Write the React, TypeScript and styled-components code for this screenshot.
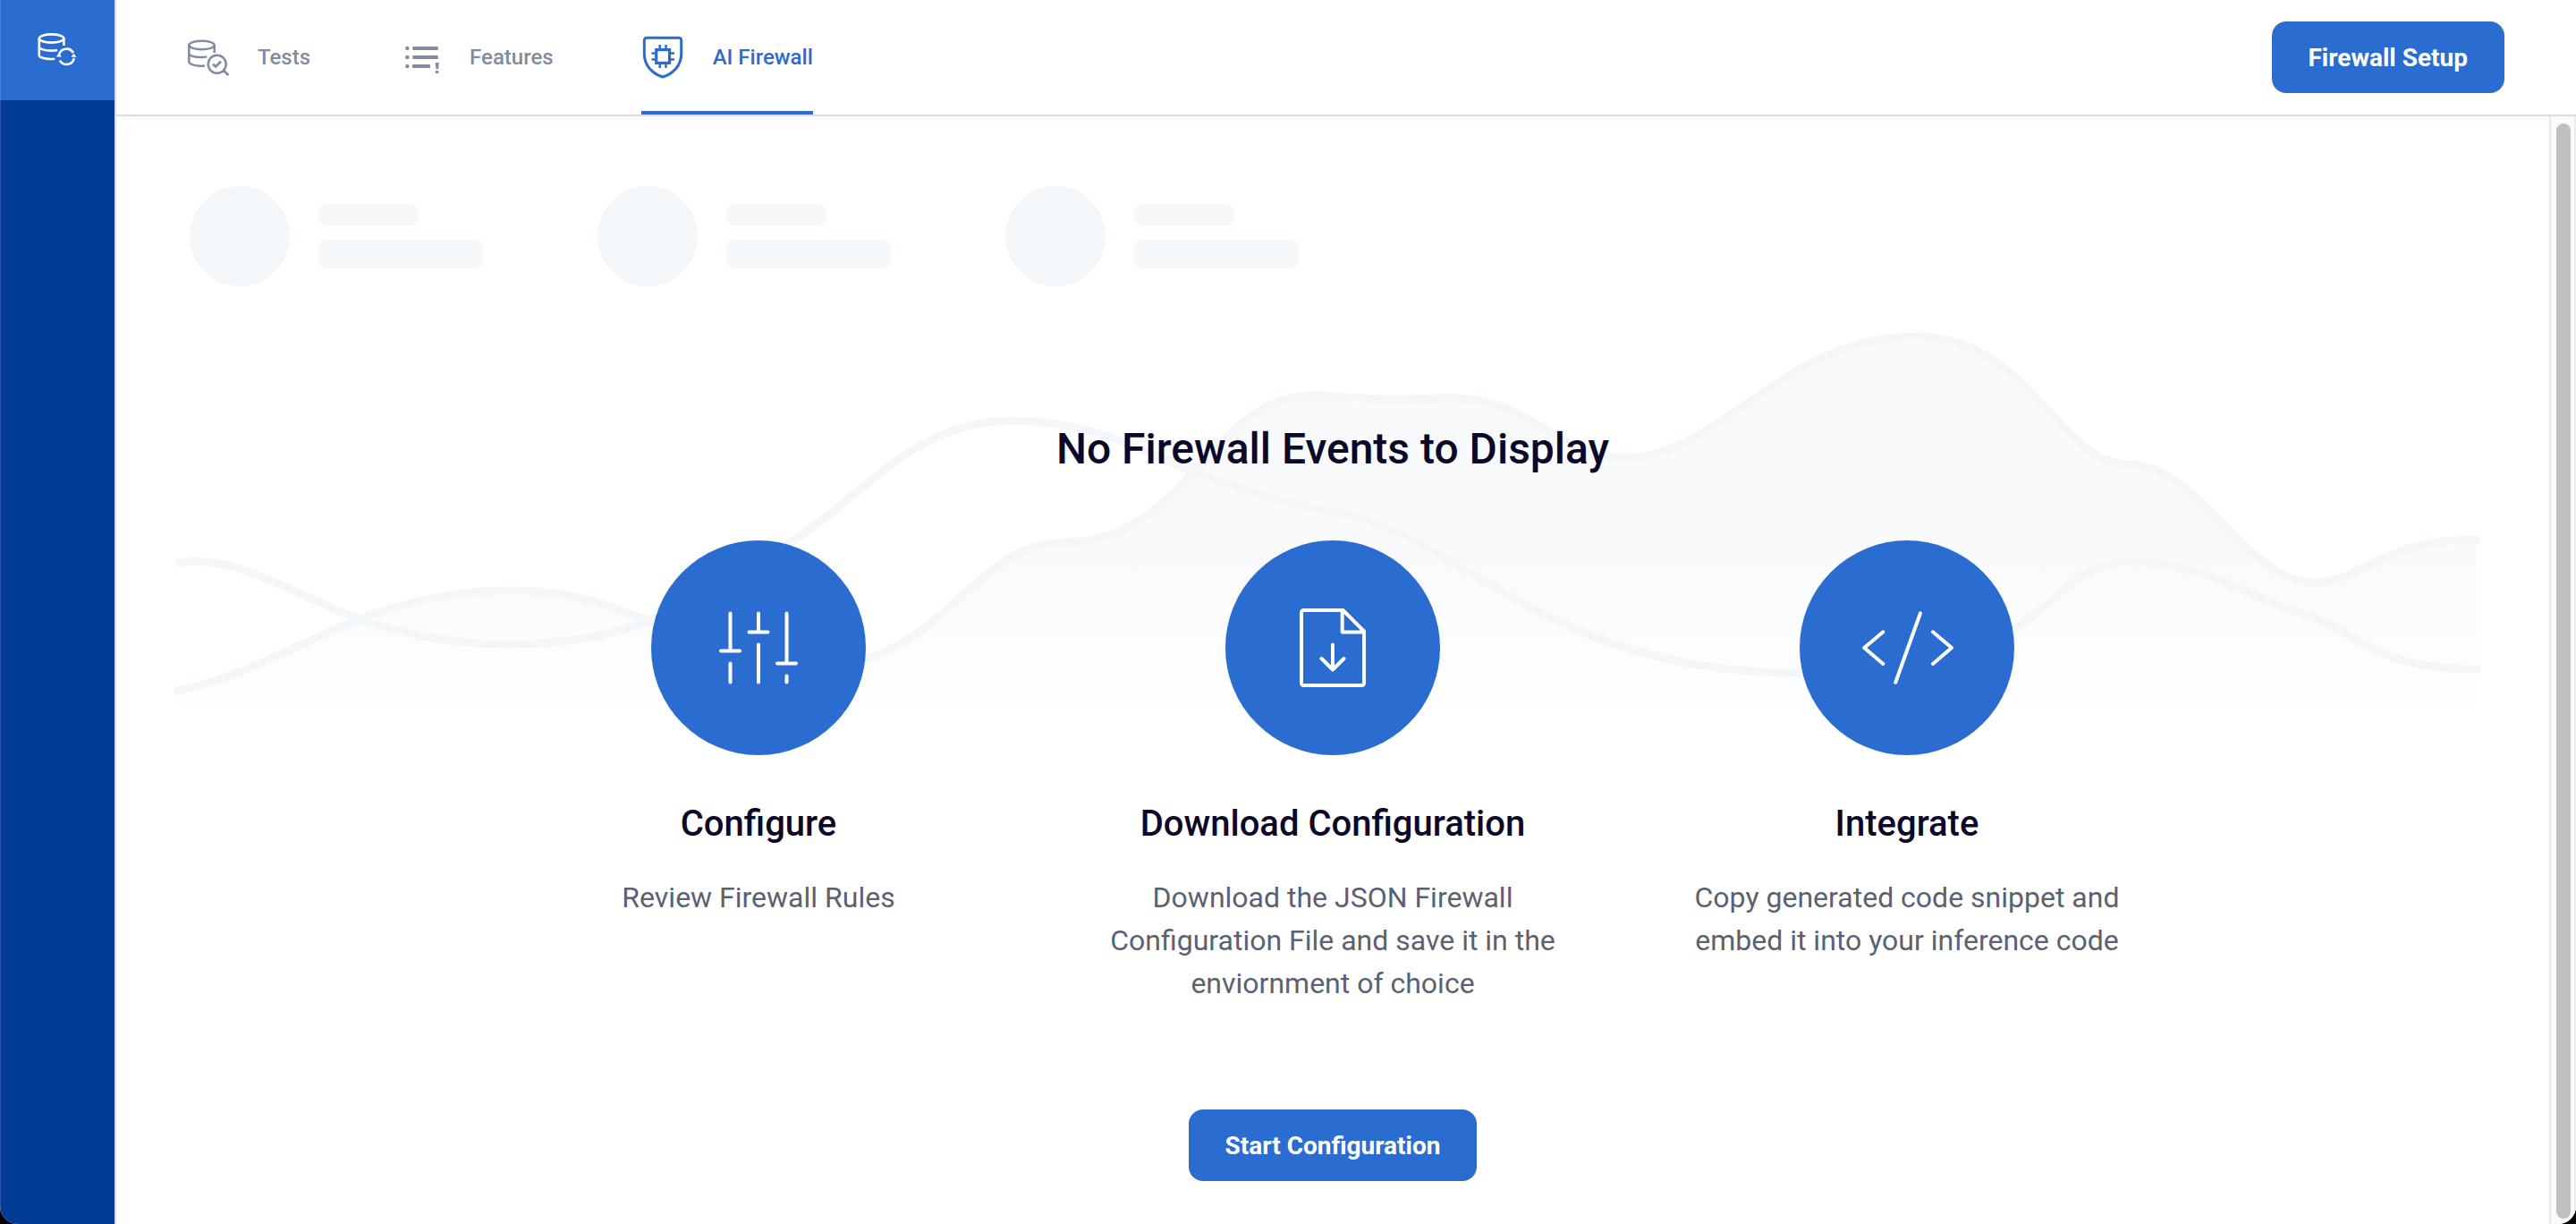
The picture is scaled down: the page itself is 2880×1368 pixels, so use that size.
import React from "react";
import styled, { createGlobalStyle } from "styled-components";

const color = {
  primary: "#2b6cd0",
  navy: "#003c96",
  ink: "#0b0829",
  text: "#5a6271",
  muted: "#828c9f",
  line: "#d7dcea",
  ghost: "#f3f7fa",
};

const GlobalStyle = createGlobalStyle`
  *, *::before, *::after { box-sizing: border-box; }
  body {
    margin: 0;
    background: #000;
    font-family: Roboto, "Liberation Sans", sans-serif;
  }
  h1, h2, p { margin: 0; }
`;

const Shell = styled.div`
  display: flex;
  min-height: 100vh;
  background: #fff;
  border-radius: 0 0 20px 20px;
  overflow: hidden;
`;

const Sidebar = styled.aside`
  flex: none;
  width: 130px;
  background: ${color.navy};
  border-right: 2px solid ${color.line};
  box-shadow: inset 1px 0 0 rgba(255, 255, 255, 0.14);
`;

const SidebarLink = styled.a`
  display: flex;
  align-items: center;
  justify-content: center;
  height: 112px;
  background: ${color.primary};
  box-shadow: inset 1px 0 0 rgba(255, 255, 255, 0.14);
  color: #fff;
`;

const Page = styled.div`
  flex: 1;
  min-width: 0;
  display: flex;
  flex-direction: column;
`;

const Header = styled.header`
  display: flex;
  align-items: center;
  justify-content: space-between;
  padding: 0 80px 0 78px;
  border-bottom: 2px solid ${color.line};
`;

const Tabs = styled.nav`
  display: flex;
  gap: 98px;
`;

const Tab = styled.a<{ $active?: boolean }>`
  display: flex;
  align-items: center;
  gap: 32px;
  height: 128px;
  border-top: 4px solid transparent;
  border-bottom: 4px solid ${(p) => (p.$active ? color.primary : "transparent")};
  color: ${(p) => (p.$active ? color.primary : color.muted)};
  font-size: 24px;
  font-weight: 500;
  line-height: 32px;
  text-decoration: none;
`;

const Button = styled.button`
  height: 80px;
  padding: 2px 41px 0;
  border: 0;
  border-radius: 16px;
  background: ${color.primary};
  color: #fff;
  font-family: inherit;
  font-size: 28px;
  font-weight: 700;
  line-height: 40px;
  cursor: pointer;
`;

const Body = styled.div`
  flex: 1;
  display: flex;
`;

const Main = styled.main`
  position: relative;
  flex: 1;
  min-width: 0;
  display: flex;
  flex-direction: column;
  align-items: center;
  padding: 78px 82px 48px;
`;

const Backdrop = styled.svg`
  position: absolute;
  top: 230px;
  left: 64px;
  width: calc(100% - 136px);
  height: 460px;
`;

const Skeletons = styled.div`
  align-self: stretch;
  display: flex;
  gap: 128px;
`;

const Skeleton = styled.div`
  display: flex;
  align-items: center;
  gap: 32px;
`;

const SkeletonDot = styled.div`
  width: 112px;
  height: 112px;
  border-radius: 50%;
  background: ${color.ghost};
`;

const SkeletonLines = styled.div`
  display: flex;
  flex-direction: column;
  gap: 16px;
`;

const SkeletonBar = styled.div<{ $wide?: boolean }>`
  width: ${(p) => (p.$wide ? 184 : 112)}px;
  height: ${(p) => (p.$wide ? 32 : 24)}px;
  border-radius: 8px;
  background: ${color.ghost};
`;

const Title = styled.h1`
  position: relative;
  margin-top: 152px;
  color: ${color.ink};
  font-size: 48px;
  font-weight: 500;
  line-height: 60px;
`;

const Steps = styled.div`
  position: relative;
  display: grid;
  grid-template-columns: repeat(3, minmax(0, 1fr));
  gap: 128px;
  width: 100%;
  max-width: 1798px;
  margin-top: 72px;
`;

const Step = styled.section`
  display: flex;
  flex-direction: column;
  align-items: center;
  text-align: center;
`;

const StepIcon = styled.div`
  display: flex;
  align-items: center;
  justify-content: center;
  width: 240px;
  height: 240px;
  border-radius: 50%;
  background: ${color.primary};
  color: #fff;
`;

const StepTitle = styled.h2`
  margin-top: 53px;
  color: ${color.ink};
  font-size: 40px;
  font-weight: 500;
  line-height: 48px;
`;

const StepText = styled.p`
  margin-top: 34px;
  color: ${color.text};
  font-size: 32px;
  line-height: 48px;
`;

const Action = styled.div`
  position: relative;
  margin-top: 117px;
`;

const ScrollTrack = styled.div`
  flex: none;
  display: flex;
  width: 30px;
  padding: 8px 4px 6px 6px;
  background: #fafafa;
  border-left: 2px solid #e8e8e8;
  border-right: 2px solid #ededed;
`;

const ScrollThumb = styled.div`
  flex: none;
  width: 16px;
  border-radius: 8px;
  background: #c1c1c1;
`;

const areaPath =
  "M198 772C320 748 400 660 573 660C720 660 770 745 910 745C1055 745 1085 606 1190 606" +
  "C1330 606 1350 442 1470 442C1500 442 1515 446 1551 446C1580 446 1600 445 1626 445" +
  "C1710 445 1745 512 1815 512C1925 512 1990 376 2143 376C2270 376 2300 519 2380 519" +
  "C2460 519 2510 651 2588 651C2640 651 2660 603 2769 603";

const linePath =
  "M200 629C300 614 370 720 568 720C740 720 800 650 885 605C960 560 1020 470 1131 470" +
  "C1230 470 1290 512 1338 528C1390 548 1430 561 1484 571C1630 590 1720 752 2009 752" +
  "C2320 752 2270 628 2386 628C2460 628 2520 670 2575 686C2640 706 2650 748 2769 748";

function EventsBackdrop() {
  return (
    <Backdrop viewBox="194 360 2584 460" preserveAspectRatio="none" aria-hidden="true">
      <defs>
        <linearGradient id="area" gradientUnits="userSpaceOnUse" x1="0" y1="376" x2="0" y2="812">
          <stop offset="0" stopColor="#f9fafc" />
          <stop offset="0.55" stopColor="#f9fafc" />
          <stop offset="1" stopColor="#f9fafc" stopOpacity="0" />
        </linearGradient>
      </defs>
      <path d={`${areaPath}V812H198Z`} fill="url(#area)" />
      <g fill="none" stroke={color.ghost} strokeWidth="9" strokeLinecap="round">
        <path d={areaPath} />
        <path d={linePath} />
      </g>
    </Backdrop>
  );
}

function DatabaseSyncIcon() {
  return (
    <svg width="48" height="48" viewBox="40 32 48 48" fill="none" stroke="currentColor" strokeWidth="2.6" aria-hidden="true">
      <ellipse cx="57.6" cy="43" rx="13.8" ry="4.6" />
      <path d="M43.800 43v19c0 2.200 6.200 4 12.800 4 1.800 0 3.200-.1 4.600-.3M71.400 43v8M43.800 52.500c0 2.200 6.200 4.100 13.300 4.100 2.500 0 5-.2 7-.7" />
      <path d="M66 61.200a8.700 8.700 0 0 1 16-2.100M82.800 64.900a8.700 8.700 0 0 1-16 2.800" />
      <path d="M63 63.400l2.900-4.400 2.900 4.400zM79.400 63.600l3.300-3.800 2.700 4.200z" fill="currentColor" stroke="none" />
    </svg>
  );
}

function DatabaseSearchIcon() {
  return (
    <svg width="48" height="48" viewBox="208 40 48 48" fill="none" stroke="currentColor" strokeWidth="2.500" aria-hidden="true">
      <ellipse cx="225.500" cy="50.500" rx="14.200" ry="4.700" />
      <path d="M211.300 50.500v18.500c0 2.600 6.200 4.700 13.500 4.700 1.600 0 3-.1 4.300-.3M239.700 50.500v8.500M211.300 60c0 2.300 6.200 4.100 13.500 4.100 2.400 0 4.600-.3 6.500-.7" />
      <circle cx="242.700" cy="71.700" r="10" />
      <path d="M250 78.800l5.300 5.300M238 71.700l3.200 2.700 5.800-5.700" strokeWidth="2.800" />
    </svg>
  );
}

function FeatureListIcon() {
  return (
    <svg width="48" height="48" viewBox="446 40 48 48" fill="currentColor" aria-hidden="true">
      <circle cx="456.300" cy="54" r="2.200" />
      <circle cx="456.300" cy="64" r="2.200" />
      <circle cx="456.300" cy="74" r="2.200" />
      <rect x="462.300" y="52" width="28.500" height="4" rx="0.800" />
      <rect x="462.300" y="62" width="28.500" height="4" rx="0.800" />
      <rect x="462" y="72" width="20" height="4" rx="0.800" />
      <path d="M487.800 70h4l-.7 7.200h-2.600zM488 79h3.400v3H488z" />
    </svg>
  );
}

function FirewallIcon() {
  return (
    <svg width="48" height="48" viewBox="718 40 48 48" fill="none" stroke="currentColor" strokeWidth="3" aria-hidden="true">
      <path d="M724 42.200h36a2.700 2.700 0 0 1 2.700 2.700V60c0 13-8.700 22.500-20.700 26-12-3.500-20.700-13-20.700-26V44.900a2.700 2.700 0 0 1 2.700-2.700z" />
      <rect x="734.700" y="55.600" width="14.800" height="14.800" strokeWidth="3.200" />
      <path d="M738.700 50v4.500M745.500 50v4.500M738.700 71.500V76M745.500 71.500V76M729.500 59.500h4M729.500 66.500h4M750.500 59.500h4.500M750.500 66.500h4.500" strokeWidth="2.500" />
    </svg>
  );
}

const StepSvg = styled.svg`
  width: 104px;
  height: 104px;
  fill: none;
  stroke: currentColor;
  stroke-width: 4;
  stroke-linecap: round;
  stroke-linejoin: round;
`;

function SlidersIcon() {
  return (
    <StepSvg viewBox="-52 -52 104 104" aria-hidden="true">
      <path d="M-31.500-38.500V3.500M-42 3.500h21M-31.500 17.500v21M0-38.500v21M-10.500-17.500h21M0-3.500v42M31.500-38.500v56M21 17.500h21M31.500 31.500v7" />
    </StepSvg>
  );
}

function FileDownloadIcon() {
  return (
    <StepSvg viewBox="-52 -52 104 104" aria-hidden="true">
      <path d="M11.500-42H-32.500a2.500 2.500 0 0 0-2.500 2.500v79a2.500 2.500 0 0 0 2.500 2.500h65a2.500 2.500 0 0 0 2.500-2.500V-18.500zM10.700-41v23.500H34M0-3.500v28M-12.500 12 0 24.500 12.500 12" />
    </StepSvg>
  );
}

function CodeIcon() {
  return (
    <StepSvg viewBox="-52 -52 104 104" aria-hidden="true">
      <path d="M-26.700-17.700-47.700 0l21 18M15-38.700-12.800 38.700M29-17.700 50 0 29 18" />
    </StepSvg>
  );
}

const tabs = [
  { label: "Tests", Icon: DatabaseSearchIcon },
  { label: "Features", Icon: FeatureListIcon },
  { label: "AI Firewall", Icon: FirewallIcon, active: true },
];

const steps = [
  { title: "Configure", text: "Review Firewall Rules", Icon: SlidersIcon },
  {
    title: "Download Configuration",
    text: "Download the JSON Firewall Configuration File and save it in the enviornment of choice",
    Icon: FileDownloadIcon,
  },
  {
    title: "Integrate",
    text: "Copy generated code snippet and embed it into your inference code",
    Icon: CodeIcon,
  },
];

export default function App() {
  return (
    <>
      <GlobalStyle />
      <Shell>
        <Sidebar>
          <SidebarLink href="#" aria-label="Data">
            <DatabaseSyncIcon />
          </SidebarLink>
        </Sidebar>
        <Page>
          <Header>
            <Tabs>
              {tabs.map(({ label, Icon, active }) => (
                <Tab key={label} href="#" $active={active} aria-current={active ? "page" : undefined}>
                  <Icon />
                  {label}
                </Tab>
              ))}
            </Tabs>
            <Button type="button">Firewall Setup</Button>
          </Header>
          <Body>
            <Main>
              <EventsBackdrop />
              <Skeletons aria-hidden="true">
                {[0, 1, 2].map((i) => (
                  <Skeleton key={i}>
                    <SkeletonDot />
                    <SkeletonLines>
                      <SkeletonBar />
                      <SkeletonBar $wide />
                    </SkeletonLines>
                  </Skeleton>
                ))}
              </Skeletons>
              <Title>No Firewall Events to Display</Title>
              <Steps>
                {steps.map(({ title, text, Icon }) => (
                  <Step key={title}>
                    <StepIcon>
                      <Icon />
                    </StepIcon>
                    <StepTitle>{title}</StepTitle>
                    <StepText>{text}</StepText>
                  </Step>
                ))}
              </Steps>
              <Action>
                <Button type="button">Start Configuration</Button>
              </Action>
            </Main>
            <ScrollTrack aria-hidden="true">
              <ScrollThumb />
            </ScrollTrack>
          </Body>
        </Page>
      </Shell>
    </>
  );
}
